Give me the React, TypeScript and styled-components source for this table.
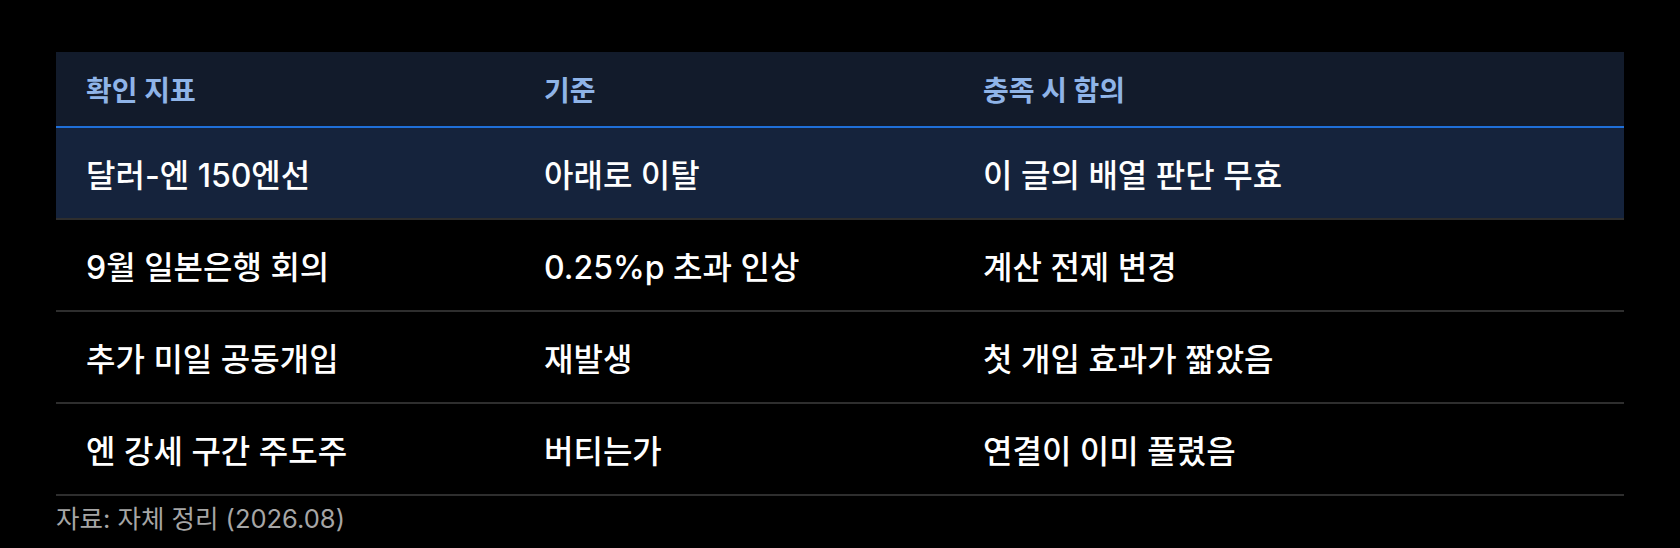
import styled, { createGlobalStyle } from "styled-components";

const GlobalStyle = createGlobalStyle`
  html, body {
    margin: 0;
    background: #000;
  }
  body {
    font-family: Inter, "Noto Sans CJK KR", sans-serif;
  }
`;

const Page = styled.div`
  padding: 52px 56px 0;
  background: #000;
  min-height: 548px;
  box-sizing: border-box;
`;

const Table = styled.table`
  width: 100%;
  border-collapse: collapse;
  table-layout: fixed;
`;

const HeadRow = styled.tr`
  background: #121b2b;
  border-bottom: 2px solid #1f6fd8;
`;

const HeadCell = styled.th<{ $width?: number }>`
  width: ${(p) => (p.$width ? `${p.$width}px` : "auto")};
  height: 75px;
  padding: 0 30px;
  box-sizing: border-box;
  text-align: left;
  color: #8fb4e8;
  font-size: 28px;
  font-weight: 700;
`;

const Row = styled.tr<{ $highlight?: boolean }>`
  background: ${(p) => (p.$highlight ? "#15233c" : "transparent")};
  border-bottom: 2px solid #2e2e2e;
`;

const Cell = styled.td`
  height: 92px;
  padding: 0 30px;
  box-sizing: border-box;
  color: #ffffff;
  font-size: 32px;
  font-weight: 500;
  white-space: nowrap;
`;

const Source = styled.p`
  margin: 2px 0 0;
  color: #a6a6a6;
  font-size: 25.5px;
  font-weight: 400;
`;

const rows = [
  ["달러-엔 150엔선", "아래로 이탈", "이 글의 배열 판단 무효"],
  ["9월 일본은행 회의", "0.25%p 초과 인상", "계산 전제 변경"],
  ["추가 미일 공동개입", "재발생", "첫 개입 효과가 짧았음"],
  ["엔 강세 구간 주도주", "버티는가", "연결이 이미 풀렸음"],
];

export default function App() {
  return (
    <>
      <GlobalStyle />
      <Page>
        <Table>
          <thead>
            <HeadRow>
              <HeadCell $width={458}>확인 지표</HeadCell>
              <HeadCell $width={439}>기준</HeadCell>
              <HeadCell>충족 시 함의</HeadCell>
            </HeadRow>
          </thead>
          <tbody>
            {rows.map((r, i) => (
              <Row key={r[0]} $highlight={i === 0}>
                {r.map((c) => (
                  <Cell key={c}>{c}</Cell>
                ))}
              </Row>
            ))}
          </tbody>
        </Table>
        <Source>자료: 자체 정리 (2026.08)</Source>
      </Page>
    </>
  );
}
